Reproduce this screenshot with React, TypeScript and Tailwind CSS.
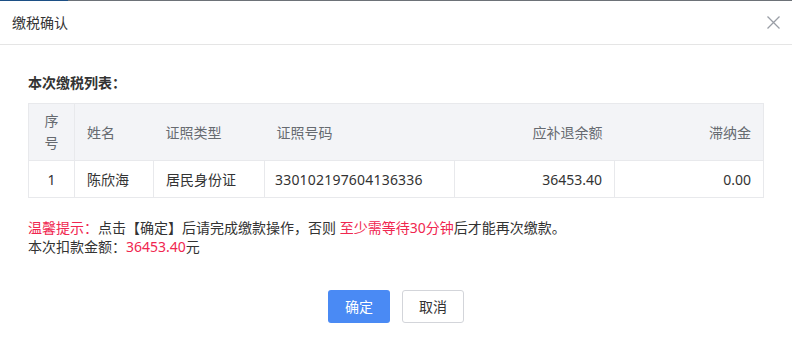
import React from "react";

export default function App() {
  const font = { fontFamily: '"Noto Sans", "Noto Sans CJK SC", sans-serif' };
  return (
    <div className="w-[792px] h-[343px] bg-white overflow-hidden text-[14px] text-[#333333]" style={font}>
      <div className="flex h-px">
        <div className="w-[68px] bg-[#1c4f85]" />
        <div className="flex-1 bg-[#6d7278]" />
      </div>
      <div className="flex items-center justify-between h-[44px] px-3 border-b border-[#e5e5e5]">
        <span className="text-[14px] text-[#333333]">缴税确认</span>
        <svg width="13" height="13" viewBox="0 0 13 13">
          <path d="M0.5 0.5L12.5 12.5M12.5 0.5L0.5 12.5" stroke="#9a9ea6" strokeWidth="1.3" />
        </svg>
      </div>
      <div className="px-[28px] pt-[28px]">
        <div className="font-bold text-[14px] leading-[20px] text-[#333]">本次缴税列表：</div>
        <table className="mt-[10px] w-[735px] border-collapse table-fixed">
          <colgroup>
            <col className="w-[46px]" />
            <col className="w-[79px]" />
            <col className="w-[111px]" />
            <col className="w-[190px]" />
            <col className="w-[160px]" />
            <col className="w-[149px]" />
          </colgroup>
          <thead>
            <tr className="h-[57px] bg-[#f3f4f7] text-[#666a70] font-normal">
              <th className="border border-[#e8e9ec] font-normal text-center leading-[22px] px-[12px]">序号</th>
              <th className="border-y border-[#e8e9ec] font-normal text-left pl-[12px]">姓名</th>
              <th className="border-y border-[#e8e9ec] font-normal text-left pl-[12px]">证照类型</th>
              <th className="border-y border-[#e8e9ec] font-normal text-left pl-[12px]">证照号码</th>
              <th className="border-y border-[#e8e9ec] font-normal text-right pr-[12px]">应补退余额</th>
              <th className="border border-l-0 border-[#e8e9ec] font-normal text-right pr-[12px]">滞纳金</th>
            </tr>
          </thead>
          <tbody>
            <tr className="h-[37px]">
              <td className="border border-[#e8e9ec] text-center">1</td>
              <td className="border border-[#e8e9ec] pl-[12px]">陈欣海</td>
              <td className="border border-[#e8e9ec] pl-[12px]">居民身份证</td>
              <td className="border border-[#e8e9ec] pl-[10px] tracking-[0.2px]">330102197604136336</td>
              <td className="border border-[#e8e9ec] text-right pr-[12px]">36453.40</td>
              <td className="border border-[#e8e9ec] text-right pr-[12px]">0.00</td>
            </tr>
          </tbody>
        </table>
        <div className="mt-[20px] leading-[19px]">
          <div>
            <span className="text-[#f0264f]">温馨提示：</span>点击【确定】后请完成缴款操作，否则 <span className="text-[#f0264f]">至少需等待30分钟</span>后才能再次缴款。
          </div>
          <div>
            本次扣款金额：<span className="text-[#f0264f]">36453.40</span>元
          </div>
        </div>
        <div className="flex justify-center gap-[12px] mt-[34px]">
          <button className="w-[62px] h-[33px] rounded-[3px] bg-[#4a8af4] text-white text-[14px]">确定</button>
          <button className="w-[62px] h-[33px] rounded-[3px] bg-white border border-[#d3d5da] text-[#333] text-[14px]">取消</button>
        </div>
      </div>
    </div>
  );
}
